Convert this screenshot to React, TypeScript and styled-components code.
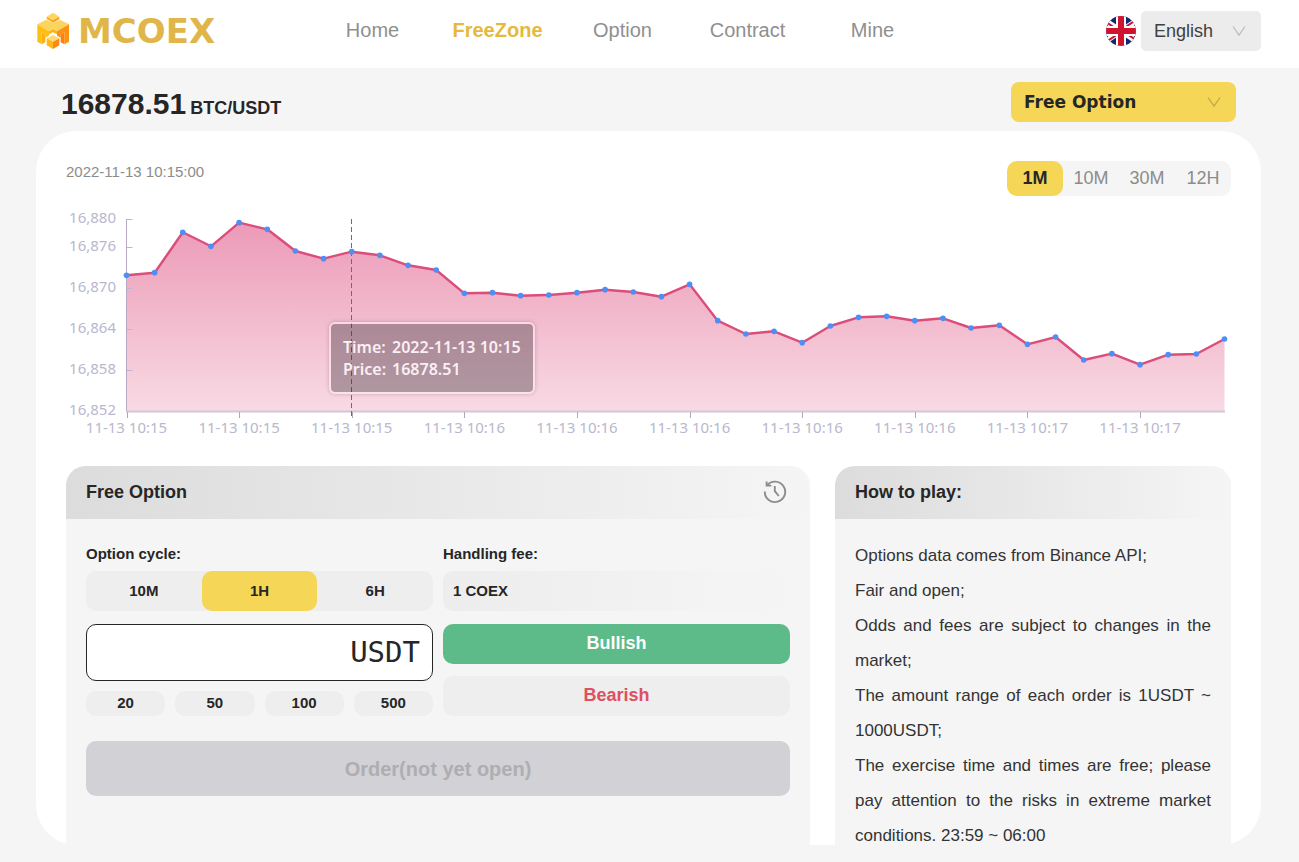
import React, { useState } from "react";
import styled, { createGlobalStyle } from "styled-components";

const GlobalStyle = createGlobalStyle`
  *, *::before, *::after { box-sizing: border-box; }
  body {
    margin: 0;
    background: #f5f5f5;
    color: #262626;
    font-family: "Liberation Sans", Arial, sans-serif;
  }
  button, input, select { font: inherit; color: inherit; }
  button { border: 0; padding: 0; background: none; cursor: pointer; }
`;

const Page = styled.div`
  display: flex;
  flex-direction: column;
  height: 100vh;
  padding-bottom: 17px;
`;

const Header = styled.header`
  display: flex;
  align-items: center;
  flex: none;
  height: 68px;
  padding: 0 38px 6px 36px;
  background: #fff;
`;

const Brand = styled.a`
  display: flex;
  align-items: center;
  gap: 8px;
  width: 274px;
  color: #e0b64b;
  font: 700 34px/36px "DejaVu Sans", sans-serif;
  text-decoration: none;
`;

const Nav = styled.nav`
  display: flex;
  flex: 1;
`;

const NavLink = styled.a<{ $active?: boolean }>`
  width: 125px;
  padding-bottom: 2px;
  text-align: center;
  font-size: 20px;
  line-height: 24px;
  text-decoration: none;
  font-weight: ${(p) => (p.$active ? 700 : 400)};
  color: ${(p) => (p.$active ? "#e5b93c" : "#8f8f8f")};
`;

const Language = styled.div`
  display: flex;
  align-items: center;
  gap: 5px;
`;

const SelectBox = styled.div<{ $accent?: boolean }>`
  display: grid;
  align-items: center;
  width: ${(p) => (p.$accent ? 225 : 120)}px;
  height: 40px;
  border-radius: ${(p) => (p.$accent ? 8 : 5)}px;
  background: ${(p) => (p.$accent ? "#f5d657" : "#ececec")};
  color: ${(p) => (p.$accent ? "#262626" : "#404040")};
  font: ${(p) =>
    p.$accent
      ? '700 17px/24px "DejaVu Sans", sans-serif'
      : '400 18px/24px "Liberation Sans", Arial, sans-serif'};

  select, svg { grid-area: 1 / 1; }
  select {
    width: 100%;
    height: 100%;
    padding: 0 32px 0 13px;
    border: 0;
    background: transparent;
    appearance: none;
  }
  svg {
    justify-self: end;
    margin-right: 15px;
    pointer-events: none;
    color: ${(p) => (p.$accent ? "#c0a94a" : "#bcbcbc")};
  }
`;

const PriceBar = styled.div`
  display: flex;
  align-items: flex-start;
  justify-content: space-between;
  flex: none;
  height: 63px;
  padding: 14px 63px 9px 61px;
`;

const Price = styled.h1`
  display: flex;
  align-items: baseline;
  gap: 4px;
  margin: 0;
  padding-top: 4px;
  font-size: 30px;
  line-height: 36px;
  small { font-size: 18px; line-height: 24px; }
`;

const Card = styled.main`
  display: flex;
  flex-direction: column;
  flex: 1;
  min-height: 0;
  margin: 0 38px 0 36px;
  padding: 30px 30px 0;
  border-radius: 40px;
  background: #fff;
  overflow-y: auto;
  scrollbar-width: none;
`;

const ChartBar = styled.div`
  display: flex;
  justify-content: space-between;
  flex: none;
  margin-bottom: 17px;
`;

const Stamp = styled.time`
  color: #8c8c8c;
  font-size: 15px;
  line-height: 22px;
`;

const Intervals = styled.div`
  display: flex;
  border-radius: 10px;
  background: #f5f5f5;
`;

const Interval = styled.button<{ $active: boolean }>`
  width: 56px;
  height: 35px;
  border-radius: 10px;
  font-size: 18px;
  font-weight: ${(p) => (p.$active ? 700 : 400)};
  color: ${(p) => (p.$active ? "#262626" : "#8c8c8c")};
  background: ${(p) => (p.$active ? "#f5d657" : "transparent")};
`;

const ChartFrame = styled.div`
  position: relative;
  flex: none;
  margin-bottom: 26px;
  svg { display: block; width: 100%; overflow: visible; }
  text { fill: #b9b8ce; font: 15px "Noto Sans", sans-serif; }
`;

const Tooltip = styled.dl`
  position: absolute;
  left: 23%;
  top: 48%;
  display: grid;
  grid-template-columns: auto auto;
  column-gap: 6px;
  margin: 0 0 0 -5px;
  padding: 12px;
  border: 2px solid rgba(255, 235, 242, 0.6);
  border-radius: 6px;
  background: rgba(50, 45, 50, 0.36);
  background-clip: padding-box;
  box-shadow: 0 0 4px rgba(0, 0, 0, 0.2);
  color: #fbeff4;
  font: 600 16px/22px "Noto Sans", sans-serif;
  dt, dd { margin: 0; }
`;

const Panels = styled.div`
  display: grid;
  grid-template-columns: 744fr 396fr;
  gap: 25px;
  flex: 1 0 auto;
`;

const Panel = styled.section`
  border-radius: 20px 20px 0 0;
  background: #f5f5f5;
`;

const PanelHead = styled.div`
  display: flex;
  align-items: center;
  justify-content: space-between;
  height: 53px;
  padding: 0 23px 2px 20px;
  border-radius: 20px 20px 0 0;
  background: linear-gradient(90deg, #dcdcdc, #f5f5f5);
  h2 { margin: 0; font-size: 18px; line-height: 24px; }
  button { display: flex; color: #8c8c8c; }
`;

const OrderForm = styled.form`
  display: grid;
  grid-template-columns: 1fr 1fr;
  column-gap: 10px;
  padding: 24px 20px 20px;
`;

const Column = styled.div`
  display: flex;
  flex-direction: column;
  min-width: 0;
`;

const FieldLabel = styled.span`
  margin-bottom: 6px;
  font-size: 15px;
  font-weight: 700;
  line-height: 22px;
`;

const Cycles = styled.div`
  display: flex;
  margin-bottom: 13px;
  border-radius: 10px;
  background: #eeeeee;
`;

const Cycle = styled.button<{ $active: boolean }>`
  flex: 1;
  height: 40px;
  padding-bottom: 2px;
  border-radius: 10px;
  font-size: 15px;
  font-weight: 700;
  background: ${(p) => (p.$active ? "#f5d657" : "transparent")};
`;

const Amount = styled.label`
  display: flex;
  align-items: center;
  height: 57px;
  margin-bottom: 10px;
  padding: 0 12px 2px;
  border: 1px solid #262626;
  border-radius: 10px;
  background: #fff;
  font: 29px/40px "DejaVu Sans Mono", monospace;
  input {
    flex: 1;
    min-width: 0;
    border: 0;
    outline: 0;
    background: none;
    text-align: right;
  }
`;

const Presets = styled.div`
  display: flex;
  gap: 10px;
`;

const Preset = styled.button`
  flex: 1;
  height: 25px;
  padding-bottom: 2px;
  border-radius: 10px;
  background: #eeeeee;
  font-size: 15px;
  font-weight: 700;
`;

const Fee = styled.output`
  height: 40px;
  margin-bottom: 13px;
  padding: 0 10px;
  border-radius: 10px;
  background: linear-gradient(90deg, #ededed, #f5f5f5);
  font-size: 15px;
  font-weight: 700;
  line-height: 40px;
`;

const Direction = styled.button<{ $bullish?: boolean }>`
  height: 40px;
  margin-bottom: ${(p) => (p.$bullish ? 12 : 0)}px;
  padding-bottom: 2px;
  border-radius: 10px;
  font-size: 18px;
  font-weight: 700;
  color: ${(p) => (p.$bullish ? "#fff" : "#dd5160")};
  background: ${(p) => (p.$bullish ? "#5dba89" : "#eeeeee")};
`;

const Submit = styled.button`
  grid-column: 1 / -1;
  height: 55px;
  margin-top: 25px;
  padding-top: 2px;
  border-radius: 10px;
  background: #d1d1d6;
  color: #aeaeb2;
  font-size: 20px;
  font-weight: 700;
`;

const Rules = styled.div`
  padding: 19px 20px 0;
  color: #333;
  font-size: 17px;
  line-height: 35px;
  text-align: justify;
  p { margin: 0; }
`;

const levels = [
  226, 218, 97, 139, 68, 88, 153, 176, 155, 166, 196, 210, 280, 278, 287, 285,
  278, 269, 276, 290, 253, 362, 402, 394, 428, 378, 352, 349, 362, 355, 384,
  376, 433, 411, 480, 461, 494, 464, 462, 417,
];
const points = levels.map((v, i) => ({
  x: 60.5 + (i * 1098) / 39,
  y: v / 3 - 13,
}));
const line = points.map((p) => `${p.x.toFixed(1)},${p.y.toFixed(1)}`).join(" ");
const yTicks: [string, number][] = [
  ["16,880", 6.5], ["16,876", 34.5], ["16,870", 75.5],
  ["16,864", 116.5], ["16,858", 157.5], ["16,852", 198.5],
];
const xLabels = [15, 15, 15, 16, 16, 16, 16, 16, 17, 17];

function PriceChart() {
  return (
    <ChartFrame>
      <svg viewBox="0 0 1165 227" role="img" aria-label="BTC/USDT price">
        <defs>
          <linearGradient id="area" x1="0" y1="0" x2="0" y2="1">
            <stop offset="0" stopColor="#ec9ab7" />
            <stop offset="1" stopColor="#f8dae4" />
          </linearGradient>
        </defs>
        <polygon points={`60.5,198.5 ${line} 1158.5,198.5`} fill="url(#area)" />
        {yTicks.map(([label, y]) => (
          <g key={label}>
            <path d={`M60.5 ${y}h6`} stroke="#b9b8ce" />
            <text x="50" y={y + 3} textAnchor="end">{label}</text>
          </g>
        ))}
        <path d="M60.5 6v193" stroke="#b9a9c4" />
        <path d="M60 198.5h1099" stroke="#d3c6d6" strokeWidth="2" />
        {xLabels.map((m, i) => (
          <g key={i}>
            <path d={`M${Math.round(points[i * 4].x) + 0.5} 199v6`} stroke="#a9a8bc" />
            <text x={points[i * 4].x} y="220" textAnchor="middle">{`11-13 10:${m}`}</text>
          </g>
        ))}
        <path d="M285.5 6v199" stroke="#78657c" strokeDasharray="5 3" />
        <polyline points={line} fill="none" stroke="#db4d7a" strokeWidth="2.4" strokeLinejoin="round" />
        {points.map((p) => (
          <circle key={p.x} cx={p.x} cy={p.y} r="2.8" fill="#4d8ff5" />
        ))}
      </svg>
      <Tooltip>
        <dt>Time:</dt>
        <dd>2022-11-13 10:15</dd>
        <dt>Price:</dt>
        <dd>16878.51</dd>
      </Tooltip>
    </ChartFrame>
  );
}

const Chevron = () => (
  <svg width="14" height="12" viewBox="0 0 14 12" fill="none" stroke="currentColor" strokeWidth="1.3">
    <path d="M1 1.5 7 10 13 1.5" />
  </svg>
);

const CubeMark = () => (
  <svg width="34" height="38" viewBox="50 36 100 114">
    <path d="M53 73 80 59 100 69 120 59 148 73 112 94 100 87 88 94Z" fill="#fbd45c" />
    <path d="M53 73 88 94V107L77 113V104L66 97V133L53 125Z" fill="#fdbf12" />
    <path d="M148 73 112 94V107L123 113V104L134 97V133L148 125Z" fill="#fd9210" />
    <path d="M88 94 100 87 112 94V103L100 97 88 103Z" fill="#fdb022" />
    <path d="M66 97 77 104V127L66 133Z" fill="#fdae18" />
    <path d="M134 97 123 104V127L134 133Z" fill="#fb7f13" />
    <path d="M100 38 119 50 100 61 81 50Z" fill="#fdd65c" />
    <path d="M81 50 100 61V68L81 57Z" fill="#fdab18" />
    <path d="M119 50 100 61V68L119 57Z" fill="#f99a1e" />
    <path d="M100 105 119 115 100 125 81 115Z" fill="#fddb70" />
    <path d="M81 115 100 125V147L81 136Z" fill="#fdb719" />
    <path d="M119 115 100 125V147L119 136Z" fill="#fb8a19" />
  </svg>
);

const UkFlag = () => (
  <svg width="30" height="30" viewBox="0 0 30 30" role="img" aria-label="UK">
    <clipPath id="round"><circle cx="15" cy="15" r="15" /></clipPath>
    <g clipPath="url(#round)">
      <path d="M0 0h30v30H0z" fill="#12296b" />
      <path d="M-3 3 33 27M-3 27 33 3" stroke="#fff" strokeWidth="5.5" />
      <path d="M-3 4 15 16M15 14 33 2M-3 28 15 16M15 14 33 26" stroke="#cf1430" strokeWidth="2" />
      <path d="M15 0v30M0 15h30" stroke="#fff" strokeWidth="10" />
      <path d="M15 0v30M0 15h30" stroke="#cf1430" strokeWidth="6" />
    </g>
  </svg>
);

const HistoryIcon = () => (
  <svg width="24" height="24" viewBox="0 0 24 24" fill="none" stroke="currentColor" strokeWidth="1.9">
    <path d="M4.1 5.4A10.2 10.2 0 1 1 1.8 11.6" />
    <path d="M3.6 1.4V5.6H8.4" />
    <path d="M11.8 6V11.2L15.8 16" />
  </svg>
);

export default function App() {
  const [interval, setInterval] = useState("1M");
  const [cycle, setCycle] = useState("1H");
  const [amount, setAmount] = useState("");

  return (
    <Page>
      <GlobalStyle />
      <Header>
        <Brand href="#home"><CubeMark />MCOEX</Brand>
        <Nav>
          {["Home", "FreeZone", "Option", "Contract", "Mine"].map((name) => (
            <NavLink key={name} href={`#${name.toLowerCase()}`} $active={name === "FreeZone"}>
              {name}
            </NavLink>
          ))}
        </Nav>
        <Language>
          <UkFlag />
          <SelectBox>
            <select aria-label="Language"><option>English</option></select>
            <Chevron />
          </SelectBox>
        </Language>
      </Header>
      <PriceBar>
        <Price>16878.51<small>BTC/USDT</small></Price>
        <SelectBox $accent>
          <select aria-label="Option type"><option>Free Option</option></select>
          <Chevron />
        </SelectBox>
      </PriceBar>
      <Card>
        <ChartBar>
          <Stamp>2022-11-13 10:15:00</Stamp>
          <Intervals>
            {["1M", "10M", "30M", "12H"].map((t) => (
              <Interval key={t} type="button" $active={t === interval} onClick={() => setInterval(t)}>
                {t}
              </Interval>
            ))}
          </Intervals>
        </ChartBar>
        <PriceChart />
        <Panels>
          <Panel>
            <PanelHead>
              <h2>Free Option</h2>
              <button type="button" aria-label="History"><HistoryIcon /></button>
            </PanelHead>
            <OrderForm onSubmit={(e) => e.preventDefault()}>
              <Column>
                <FieldLabel>Option cycle:</FieldLabel>
                <Cycles>
                  {["10M", "1H", "6H"].map((t) => (
                    <Cycle key={t} type="button" $active={t === cycle} onClick={() => setCycle(t)}>
                      {t}
                    </Cycle>
                  ))}
                </Cycles>
                <Amount>
                  <input aria-label="Amount" value={amount} onChange={(e) => setAmount(e.target.value)} />
                  USDT
                </Amount>
                <Presets>
                  {["20", "50", "100", "500"].map((v) => (
                    <Preset key={v} type="button" onClick={() => setAmount(v)}>{v}</Preset>
                  ))}
                </Presets>
              </Column>
              <Column>
                <FieldLabel>Handling fee:</FieldLabel>
                <Fee>1 COEX</Fee>
                <Direction type="button" $bullish>Bullish</Direction>
                <Direction type="button">Bearish</Direction>
              </Column>
              <Submit type="submit">Order(not yet open)</Submit>
            </OrderForm>
          </Panel>
          <Panel>
            <PanelHead><h2>How to play:</h2></PanelHead>
            <Rules>
              <p>Options data comes from Binance API;</p>
              <p>Fair and open;</p>
              <p>Odds and fees are subject to changes in the market;</p>
              <p>The amount range of each order is 1USDT ~ 1000USDT;</p>
              <p>
                The exercise time and times are free; please pay attention to the
                risks in extreme market conditions. 23:59 ~ 06:00
              </p>
            </Rules>
          </Panel>
        </Panels>
      </Card>
    </Page>
  );
}
